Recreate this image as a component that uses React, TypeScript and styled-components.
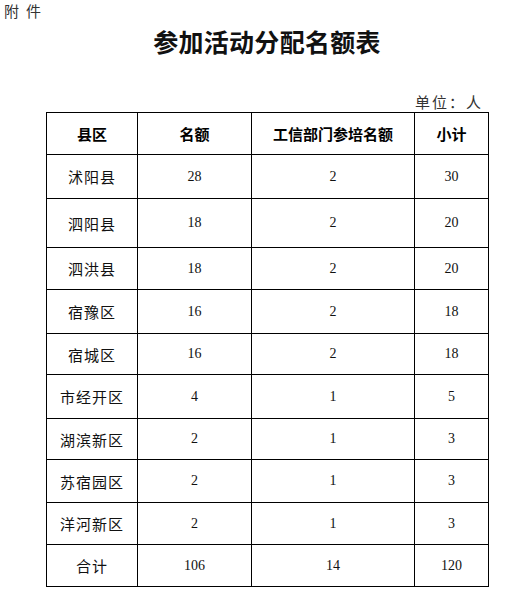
import styled, { createGlobalStyle } from 'styled-components';

type QuotaRow = {
  county: string;
  quota: number;
  training: number;
  subtotal: number;
  height: number;
};

const rows: QuotaRow[] = [
  { county: '沭阳县', quota: 28, training: 2, subtotal: 30, height: 44 },
  { county: '泗阳县', quota: 18, training: 2, subtotal: 20, height: 49 },
  { county: '泗洪县', quota: 18, training: 2, subtotal: 20, height: 42 },
  { county: '宿豫区', quota: 16, training: 2, subtotal: 18, height: 44 },
  { county: '宿城区', quota: 16, training: 2, subtotal: 18, height: 41 },
  { county: '市经开区', quota: 4, training: 1, subtotal: 5, height: 44 },
  { county: '湖滨新区', quota: 2, training: 1, subtotal: 3, height: 41 },
  { county: '苏宿园区', quota: 2, training: 1, subtotal: 3, height: 43 },
  { county: '洋河新区', quota: 2, training: 1, subtotal: 3, height: 42 },
  { county: '合计', quota: 106, training: 14, subtotal: 120, height: 42 },
];

export default function App() {
  return (
    <Page>
      <GlobalStyle />
      <Attachment>附件</Attachment>
      <Title>参加活动分配名额表</Title>
      <Unit>单位：人</Unit>
      <QuotaTable>
        <colgroup>
          <col style={{ width: 91 }} />
          <col style={{ width: 114 }} />
          <col style={{ width: 163 }} />
          <col style={{ width: 74 }} />
        </colgroup>
        <thead>
          <Row $height={42}>
            <HeadCell>县区</HeadCell>
            <HeadCell>名额</HeadCell>
            <HeadCell>工信部门参培名额</HeadCell>
            <HeadCell>小计</HeadCell>
          </Row>
        </thead>
        <tbody>
          {rows.map((row) => (
            <Row key={row.county} $height={row.height}>
              <NameCell>{row.county}</NameCell>
              <Cell>{row.quota}</Cell>
              <Cell>{row.training}</Cell>
              <Cell>{row.subtotal}</Cell>
            </Row>
          ))}
        </tbody>
      </QuotaTable>
    </Page>
  );
}

const GlobalStyle = createGlobalStyle`
  html, body {
    margin: 0;
    padding: 0;
    background: #fff;
  }
`;

const Page = styled.div`
  width: 523px;
  min-height: 605px;
  padding-top: 2px;
  box-sizing: border-box;
  color: #000;
  font-family: 'Noto Sans CJK SC', sans-serif;
`;

const Attachment = styled.div`
  padding-left: 4px;
  font-size: 15px;
  line-height: 18px;
  letter-spacing: 7px;
  color: #333;
`;

const Title = styled.h1`
  margin: 6px 0 0;
  padding-left: 11px;
  text-align: center;
  font-size: 25px;
  line-height: 30px;
  font-weight: 700;
  letter-spacing: 0.3px;
  color: #111;
`;

const Unit = styled.div`
  margin-top: 37px;
  padding-right: 40px;
  text-align: right;
  font-size: 15px;
  line-height: 18px;
  letter-spacing: 2px;
  color: #333;
`;

const QuotaTable = styled.table`
  margin: 1px 0 0 46px;
  width: 442px;
  table-layout: fixed;
  border-collapse: collapse;
  border: 1px solid #000;
`;

const Row = styled.tr<{ $height: number }>`
  height: ${(p) => p.$height}px;
`;

const HeadCell = styled.th`
  padding: 0;
  border: 1px solid #000;
  text-align: center;
  vertical-align: middle;
  font-size: 15px;
  font-weight: 700;
`;

const NameCell = styled.td`
  padding: 0;
  border: 1px solid #000;
  text-align: center;
  vertical-align: middle;
  font-size: 15px;
  letter-spacing: 1px;
  color: #111;
`;

const Cell = styled.td`
  padding: 0;
  border: 1px solid #000;
  text-align: center;
  vertical-align: middle;
  font-family: 'Liberation Serif', 'Noto Sans CJK SC', serif;
  font-size: 14px;
  color: #111;
`;
